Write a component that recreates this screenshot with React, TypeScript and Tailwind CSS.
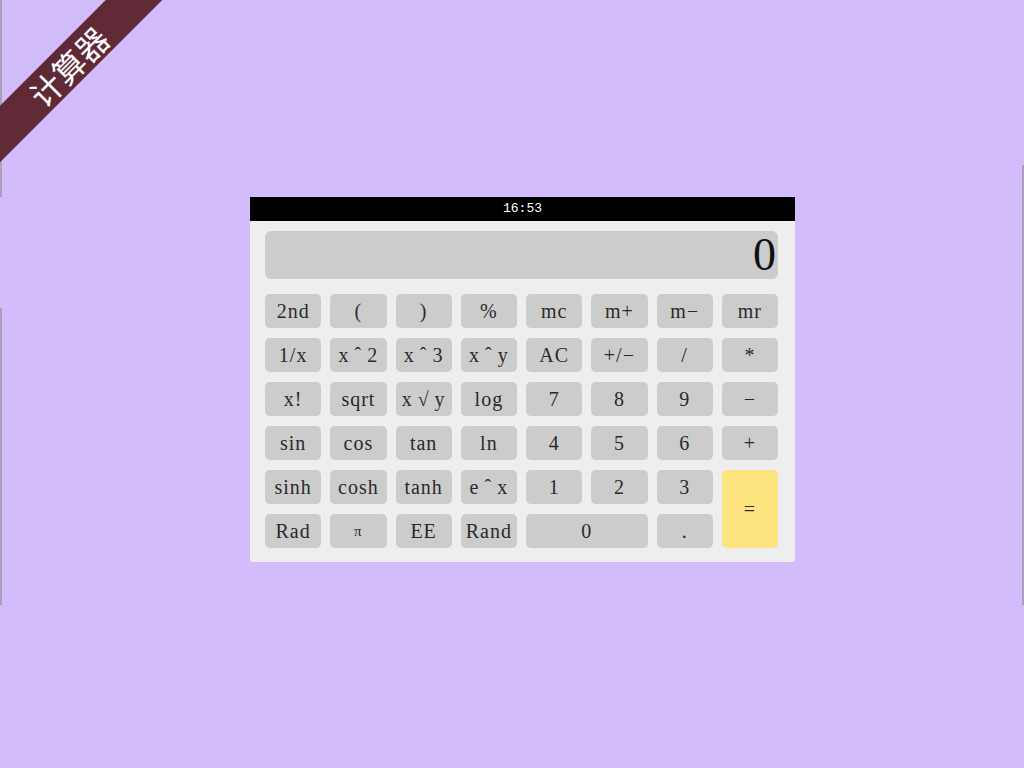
import React from "react";

type Key = { label: string; className?: string };

const keys: Key[] = [
  { label: "2nd" }, { label: "(" }, { label: ")" }, { label: "%" },
  { label: "mc" }, { label: "m+" }, { label: "m−" }, { label: "mr" },
  { label: "1/x" }, { label: "x\u2009ˆ\u20092" }, { label: "x\u2009ˆ\u20093" }, { label: "x\u2009ˆ\u2009y" },
  { label: "AC" }, { label: "+/−" }, { label: "/" }, { label: "*" },
  { label: "x!" }, { label: "sqrt" }, { label: "x\u2009√\u2009y" }, { label: "log" },
  { label: "7" }, { label: "8" }, { label: "9" }, { label: "−" },
  { label: "sin" }, { label: "cos" }, { label: "tan" }, { label: "ln" },
  { label: "4" }, { label: "5" }, { label: "6" }, { label: "+" },
  { label: "sinh" }, { label: "cosh" }, { label: "tanh" }, { label: "e\u2009ˆ\u2009x" },
  { label: "1" }, { label: "2" }, { label: "3" },
  { label: "=", className: "row-span-2 bg-[#fde47f]" },
  { label: "Rad" }, { label: "π", className: "text-[15px]" }, { label: "EE" }, { label: "Rand" },
  { label: "0", className: "col-span-2" }, { label: "." },
];

export default function App() {
  return (
    <div className="relative min-h-[768px] w-full overflow-hidden bg-[#d3bcfc] pl-[250px] pt-[197px]">
      {/* edge marks */}
      <div className="absolute left-0 top-0 h-[197px] w-[2px] bg-[#a9a2b4]" />
      <div className="absolute left-0 top-[308px] h-[297px] w-[2px] bg-[#a9a2b4]" />
      <div className="absolute right-0 top-[165px] h-[440px] w-[2px] bg-[#a9a2b4]" />

      {/* corner ribbon */}
      <div
        className="absolute left-[-52px] top-[46px] flex h-[40px] w-[240px] -rotate-45 items-center justify-center bg-[#5f2935] text-[32px] text-white"
        style={{ fontFamily: '"Noto Sans CJK SC", sans-serif' }}
      >
        计算器
      </div>

      <div className="w-[545px]">
        <div className="flex h-[24px] items-center justify-center bg-black font-['Liberation_Mono',monospace] text-[13px] text-white">
          16:53
        </div>
        <div className="rounded-b-[3px] bg-[#eeeeee] pb-[14px] pl-[15px] pr-[17px] pt-[10px]">
          <div className="flex h-[48px] items-center justify-end rounded-[6px] bg-[#cccccc] px-[2px] font-['Liberation_Serif',serif] text-[46px] leading-none text-[#111]">
            0
          </div>
          <div className="mt-[15px] grid grid-cols-8 auto-rows-[34px] gap-x-[9px] gap-y-[10px] font-['Liberation_Serif',serif] text-[20px] tracking-[1px] text-[#2a2a2a]">
            {keys.map((k, i) => (
              <div
                key={i}
                className={`flex items-center justify-center rounded-[5px] ${k.className ?? ""} ${
                  k.className?.includes("bg-") ? "" : "bg-[#cccccc]"
                }`}
              >
                {k.label}
              </div>
            ))}
          </div>
        </div>
      </div>
    </div>
  );
}
